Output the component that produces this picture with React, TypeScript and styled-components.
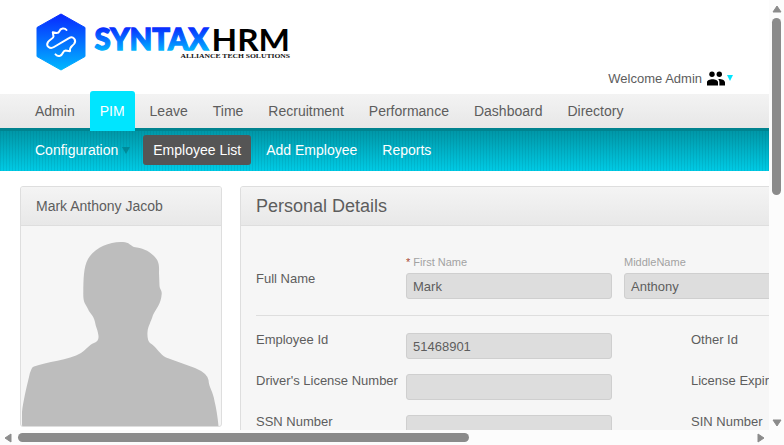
import React from "react";
import styled, { createGlobalStyle } from "styled-components";

const Global = createGlobalStyle`
  * { box-sizing: border-box; }
  html, body { margin: 0; padding: 0; overflow: hidden; background: #fff; }
  body { font-family: "Liberation Sans", Arial, sans-serif; color: #5d5d5d; }
`;
const Window = styled.div`
  width: 784px; height: 445px; display: grid;
  grid-template-columns: 769px 15px; grid-template-rows: 430px 15px;
  background: #fcfcfc; overflow: hidden;
`;
const Page = styled.div`background: #fff; overflow: hidden; min-width: 0; white-space: nowrap;`;
const Header = styled.header`
  height: 94px; display: flex; justify-content: space-between; padding: 0 36px 0 30px;
`;
const Logo = styled.svg`width: 270px; height: 84px; display: block;`;
const Welcome = styled.div`
  display: flex; align-items: flex-start; padding-top: 71px; font-size: 13px; line-height: 15px;
`;
const People = styled.svg`width: 18px; height: 16px; margin-left: 5px; display: block;`;
const Caret = styled.span<{ $color: string; $size: number }>`
  width: 0; height: 0; border: solid transparent;
  border-width: ${p => p.$size + 3}px ${p => p.$size}px 0;
  border-top-color: ${p => p.$color};
`;
const UserCaret = styled(Caret)`margin: 4px 0 0 2px;`;
const SubCaret = styled(Caret)`margin: 1px -2px 0 4px;`;
const MainNav = styled.nav`
  height: 37px; display: flex; gap: 5px; padding-left: 25px; align-items: flex-end;
  background: linear-gradient(#f3f3f3, #e7e7e7 34px, #00838f 34px);
`;
const Tab = styled.a<{ $active?: boolean }>`
  height: 40px; flex: none; padding: 0 10px; font-size: 14px; line-height: 40px; color: ${p => (p.$active ? "#fff" : "#5d5d5d")};
  background: ${p => (p.$active ? "#00e5ff" : "transparent")}; border-radius: 3px 3px 0 0;
`;
const SubNav = styled.nav`
  height: 40px; display: flex; gap: 5px; padding: 4px 0 0 25px;
  background: repeating-linear-gradient(90deg, rgba(0, 70, 90, 0.1) 0 1px, transparent 1px 3px),
    linear-gradient(#0097a7, #00cbe5);
`;
const SubTab = styled.a<{ $active?: boolean }>`
  height: 30px; padding: 0 10px; display: flex; align-items: center; font-size: 14px; color: #fff;
  border-radius: 3px; background: ${p => (p.$active ? "#555" : "transparent")};
`;
const Content = styled.main`
  display: grid; grid-template-columns: 202px 900px; gap: 18px; padding: 15px 0 0 20px; align-items: start;
`;
const Card = styled.section<{ $height: number }>`
  height: ${p => p.$height}px; background: #f6f6f6; border: 1px solid #dedede; border-radius: 3px; overflow: hidden;
`;
const CardTitle = styled.h1<{ $size: number }>`
  margin: 0; height: 39px; padding-left: 15px; font-weight: 400; font-size: ${p => p.$size}px; line-height: 38px;
  background: linear-gradient(#f4f4f4, #e8e8e8); border-bottom: 1px solid #dedede;
`;
const Avatar = styled.svg`display: block; width: 200px; height: 201px;`;
const Form = styled.div`padding: 29px 15px 0;`;
const NameRow = styled.div`
  display: grid; grid-template-columns: 150px 206px 206px; column-gap: 0; height: 60px;
`;
const NameCell = styled.div<{ $gap?: number }>`margin-left: ${p => p.$gap ?? 0}px;`;
const Hint = styled.div`
  font-size: 11px; line-height: 13px; height: 18px; padding-top: 1px; color: #a2a2a2;
  em { font-style: normal; color: #aa4935; }
`;
const Label = styled.label<{ $top?: number }>`font-size: 13px; line-height: 15px; padding-top: ${p => p.$top ?? 0}px;`;
const DetailLabel = styled(Label)`margin-top: -1px;`;
const Field = styled.div`
  width: 206px; height: 26px; border: 1px solid #cfcfcf; border-radius: 3px; background: #ddd;
  padding-left: 6px; font-size: 13px; line-height: 25px;
`;
const Details = styled.div`
  border-top: 1px solid #dedede; padding-top: 17px; display: grid;
  grid-template-columns: 150px 285px 1fr; grid-auto-rows: 41px;
`;
const VBar = styled.div`
  display: flex; flex-direction: column; align-items: center; padding: 5px 0 3px 0; justify-content: space-between;
`;
const VThumb = styled.div`width: 9px; height: 177px; border-radius: 5px; background: #8b8b8b; margin: 5px 0 auto;`;
const HBar = styled.div`
  display: flex; align-items: center; justify-content: space-between; padding: 0 4px 0 4px;
`;
const HThumb = styled.div`width: 451px; height: 9px; border-radius: 5px; background: #8b8b8b; margin: 0 auto 0 6px;`;
const Arrow = styled.svg<{ $w: number; $h: number }>`
  flex: none; width: ${p => p.$w}px; height: ${p => p.$h}px; display: block; fill: #8b8b8b; stroke: #8b8b8b; stroke-linejoin: round;
`;

const tabs = ["Admin", "PIM", "Leave", "Time", "Recruitment", "Performance", "Dashboard", "Directory"];
const rows = [
  ["Employee Id", "51468901", "Other Id"],
  ["Driver's License Number", "", "License Expiry Date"],
  ["SSN Number", "", "SIN Number"],
];

function BrandLogo() {
  return (
    <Logo viewBox="30 0 270 84">
      <defs>
        <linearGradient id="hex" x1="0" y1="14" x2="0" y2="70" gradientUnits="userSpaceOnUse">
          <stop stopColor="#0828ff" /><stop offset="1" stopColor="#00b8ff" />
        </linearGradient>
        <linearGradient id="word" x1="0" y1="27" x2="0" y2="52" gradientUnits="userSpaceOnUse">
          <stop stopColor="#0828ff" /><stop offset="1" stopColor="#00bcff" />
        </linearGradient>
      </defs>
      <path d="M61 14L85 27.5V56.5L61 70L37 56.5V27.5Z" fill="url(#hex)" stroke="url(#hex)" strokeLinejoin="round" />
      <g fill="none" stroke="#fff" strokeWidth="2" strokeLinecap="round" strokeLinejoin="round">
        <path d="M66.5 30C64.5 27.5 60.5 28.2 59.3 31.3Q58.7 33 56.500 33L52.800 32.300L53.500 36.500C53.500 38.500 50 39 48 42C45.500 46 50 49.500 54 47L69 38.200C73 35.500 77 40 74 44C72 46.500 69.500 46.500 70 51.200L65.500 50.500C62.500 50.500 63.500 54.500 60 55.800Q57.500 56.500 55.500 54.400" />
      </g>
      <text x="94.5" y="50.2" fontFamily="Lato" fontWeight="900" fontSize="30" textLength="114" lengthAdjust="spacingAndGlyphs" fill="url(#word)" stroke="url(#word)" strokeWidth="1.3">SYNTAX</text>
      <text x="211.5" y="50.7" fontFamily="Lato" fontWeight="700" fontSize="31" textLength="78.500" lengthAdjust="spacingAndGlyphs" fill="#000">HRM</text>
      <text x="180.5" y="58" fontFamily="Liberation Serif" fontWeight="700" fontSize="7" textLength="109.500" lengthAdjust="spacingAndGlyphs" fill="#111">ALLIANCE TECH SOLUTIONS</text>
    </Logo>
  );
}

export default function App() {
  return (
    <>
      <Global />
      <Window>
        <Page>
          <Header>
            <BrandLogo />
            <Welcome>
              Welcome Admin
              <People viewBox="0 0 18 16">
                <circle cx="5" cy="3.3" r="2.7" /><circle cx="12.3" cy="3.3" r="2.7" />
                <path d="M0 14.5V11.3C0 7.3 11 7.3 11 11.3V14.5ZM11.2 8C14 7.8 18 8.8 18 11.5V14.5H12.4V11.3C12.4 9.8 12 8.8 11.2 8Z" />
              </People>
              <UserCaret $color="#00e5ff" $size={3} />
            </Welcome>
          </Header>
          <MainNav>{tabs.map(t => <Tab key={t} $active={t === "PIM"}>{t}</Tab>)}</MainNav>
          <SubNav>
            <SubTab>Configuration<SubCaret $color="#008a99" $size={4} /></SubTab>
            <SubTab $active>Employee List</SubTab>
            <SubTab>Add Employee</SubTab>
            <SubTab>Reports</SubTab>
          </SubNav>
          <Content>
            <Card $height={241}>
              <CardTitle $size={14}>Mark Anthony Jacob</CardTitle>
              <Avatar viewBox="21 226 200 201">
                <path fill="#bdbdbd" d="M22 426V412C23 402 27 385 29 377Q31 367 34 366.5C46 362 69 360 81 353C87 349 89 345 94 343Q99 341 98.500 336C98 330 96 328 95 322C93 314 90 314 88 309C85 303 83 303 83.300 292C83.500 279 83.500 267 88 259C94 248 110 241 123 242C129 242 131 246 134 247C142 248 148 250 154 256C160 262 159 267 159 273L159.500 286C160 290 162 290 161.700 294C161 304 156 309 153 315C151 322 148 326 147.500 332Q147 340 150 343C156 346 160 355 166 357.500L195 368Q207 373 208.500 380C209 388 213 391 214.500 401Q217 411 218.500 426Z" />
              </Avatar>
            </Card>
            <Card $height={600}>
              <CardTitle $size={18}>Personal Details</CardTitle>
              <Form>
                <NameRow>
                  <Label $top={16}>Full Name</Label>
                  <NameCell><Hint><em>*</em> First Name</Hint><Field>Mark</Field></NameCell>
                  <NameCell $gap={12}><Hint>MiddleName</Hint><Field>Anthony</Field></NameCell>
                </NameRow>
                <Details>
                  {rows.map(([label, value, other]) => (
                    <React.Fragment key={label}>
                      <DetailLabel>{label}</DetailLabel><Field>{value}</Field><DetailLabel>{other}</DetailLabel>
                    </React.Fragment>
                  ))}
                </Details>
              </Form>
            </Card>
          </Content>
        </Page>
        <VBar>
          <Arrow $w={10} $h={8} viewBox="0 0 10 8"><path d="M5 1L9 7H1Z" /></Arrow>
          <VThumb />
          <Arrow $w={10} $h={8} viewBox="0 0 10 8"><path d="M1 1H9L5 7Z" /></Arrow>
        </VBar>
        <HBar>
          <Arrow $w={8} $h={10} viewBox="0 0 8 10"><path d="M7 1V9L1 5Z" /></Arrow>
          <HThumb />
          <Arrow $w={8} $h={10} viewBox="0 0 8 10"><path d="M1 1V9L7 5Z" /></Arrow>
        </HBar>
      </Window>
    </>
  );
}
